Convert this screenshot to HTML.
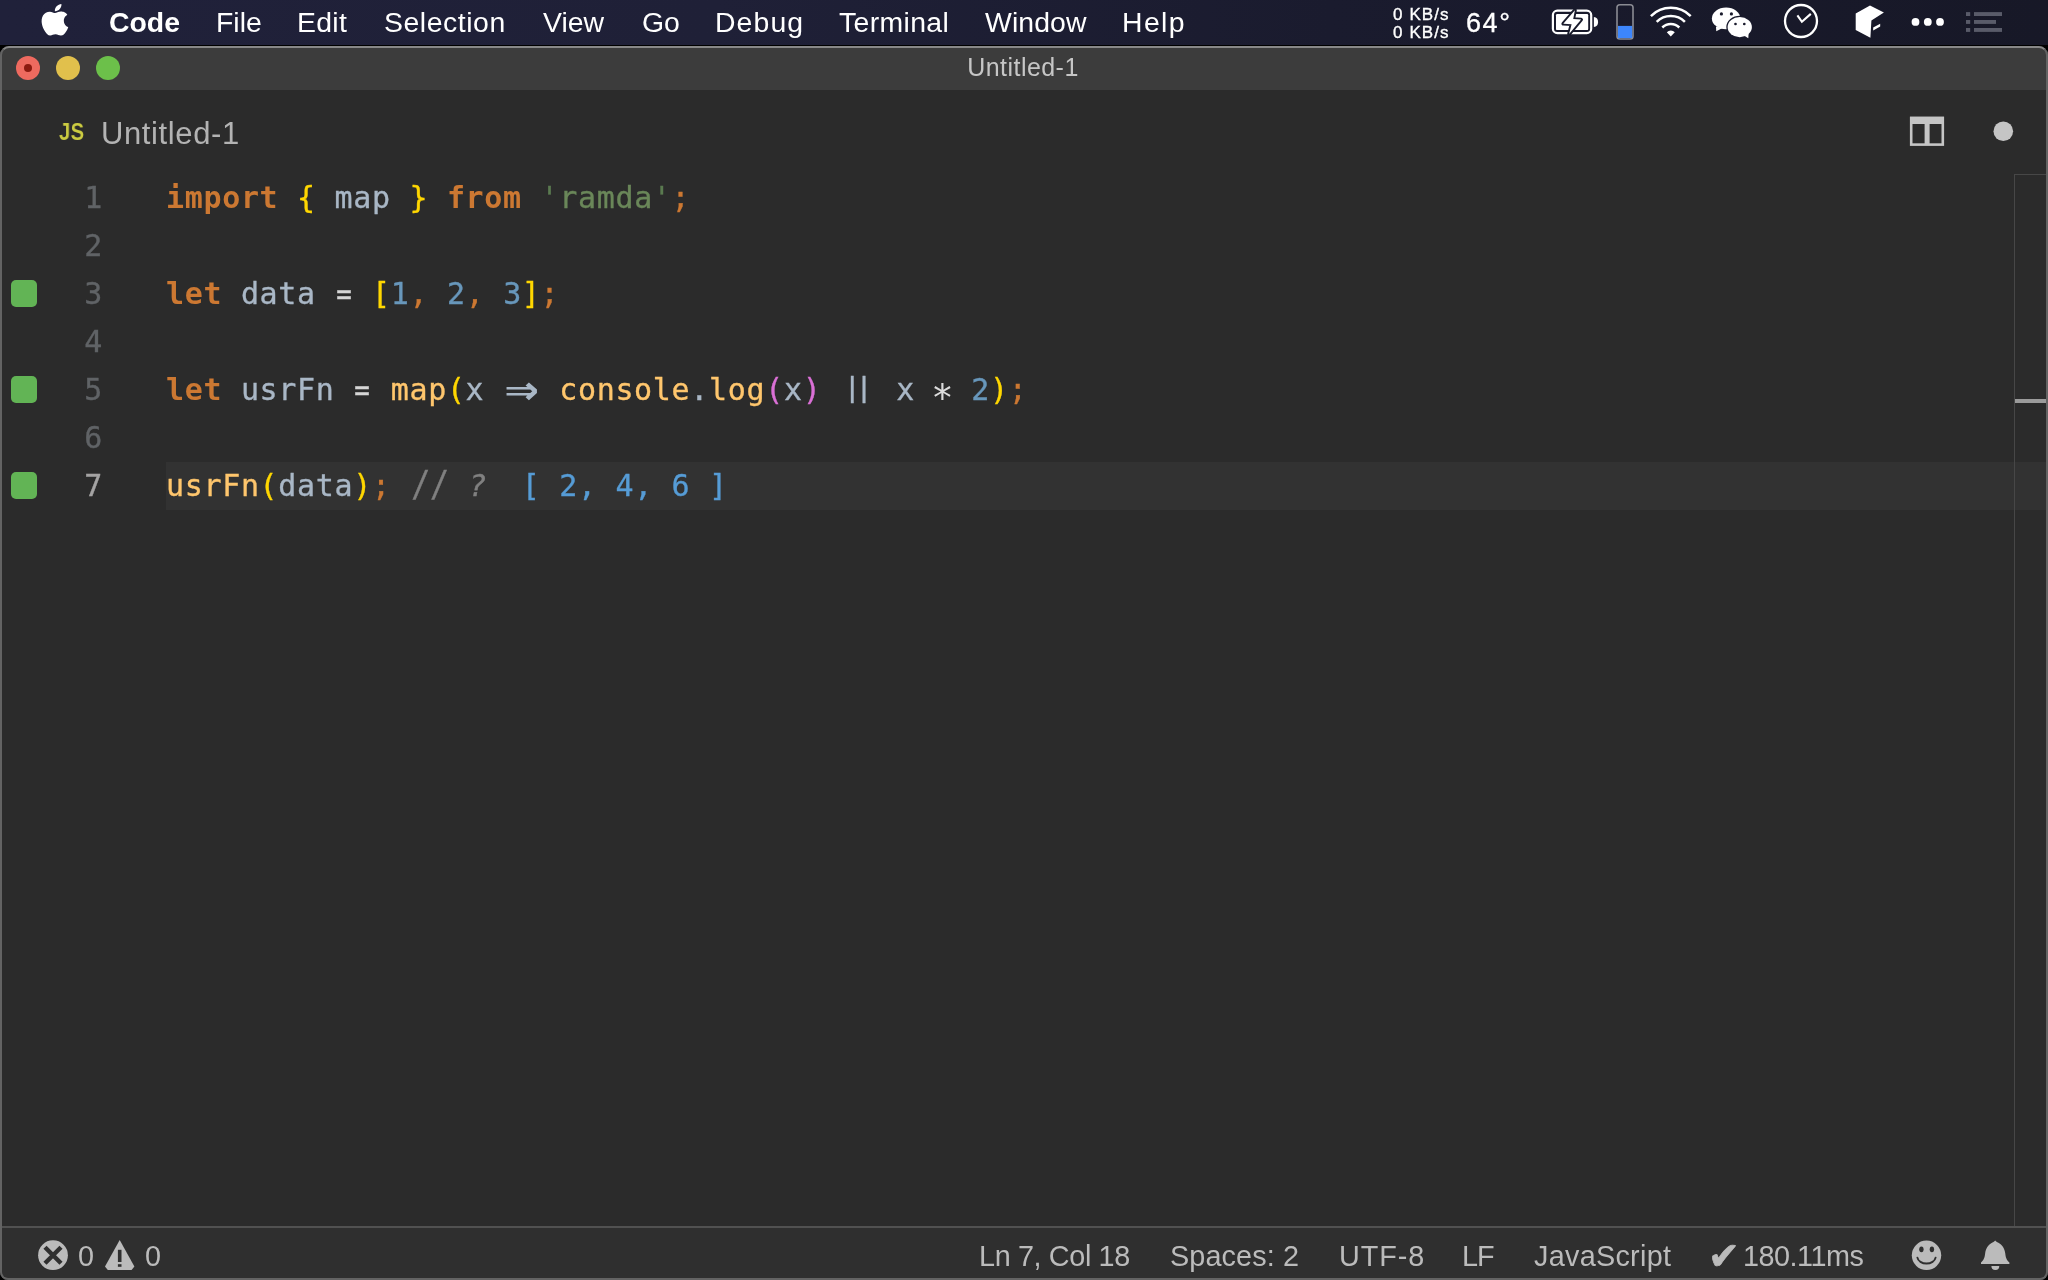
<!DOCTYPE html>
<html lang="en">
<head>
<meta charset="utf-8">
<title>Untitled-1</title>
<style>
*{box-sizing:border-box;margin:0;padding:0}
html,body{width:2048px;height:1280px;overflow:hidden;background:#000}
body{position:relative;font-family:"Liberation Sans",sans-serif;color:#fff}
.abs{position:absolute}
#menubar .mi,.net,#title,#tabs .js,#tabs .tn,.ln,#status .si{will-change:transform}
/* ---------- macOS menu bar ---------- */
#menubar{position:absolute;left:0;top:0;width:2048px;height:44.5px;background:linear-gradient(90deg,#20213a 0%,#1f2037 35%,#1a1b2e 65%,#171827 100%)}
#menubar .mi{position:absolute;top:0px;height:44px;line-height:44px;font-size:28.4px;color:#fff;white-space:nowrap}
#menubar .b{font-weight:bold}
/* ---------- window ---------- */
#win{position:absolute;left:0;top:46px;width:2048px;height:1234px;background:#2b2b2b;border-radius:9px 9px 8px 8px;overflow:hidden}
#winborder{position:absolute;left:0;top:46px;width:2048px;height:1234px;border:2px solid #636363;border-top-color:#888;border-radius:9px 9px 8px 8px;pointer-events:none}
#titlebar{position:absolute;left:0;top:0;width:2048px;height:44px;background:#3c3c3c}
#title{position:absolute;left:-1.5px;top:0.4px;width:2048px;height:42px;line-height:42px;text-align:center;font-size:25px;letter-spacing:0.45px;color:#c6c6c6}
.tl{position:absolute;top:10px;width:24px;height:24px;border-radius:50%}
/* ---------- tabs ---------- */
#tabs{position:absolute;left:0;top:44px;width:2048px;height:84px;background:#2b2b2b}
/* ---------- editor ---------- */
#editor{position:absolute;left:0;top:128px;width:2048px;height:1054px;background:#2b2b2b;font-family:"DejaVu Sans Mono","Liberation Mono",monospace;font-size:30px;letter-spacing:0.66px}
.ln{position:absolute;left:0;width:2048px;height:48px;line-height:48px;white-space:pre}
.ln .no{position:absolute;left:40px;width:63px;text-align:right;color:#606366}
.ln .cd{position:absolute;left:166px;top:0;color:#a9b7c6}
.ln .sq{position:absolute;left:10.5px;top:10.4px;width:26.6px;height:27px;border-radius:5px;background:#62b455}
.cd,.no{-webkit-text-stroke:0.35px}
.k{color:#cc7832;font-weight:bold;-webkit-text-stroke:0}
.ar{display:inline-block;width:37.44px;height:48px;vertical-align:top;text-align:center;text-indent:-3px;letter-spacing:0;font-weight:bold;font-size:50px;line-height:40px;transform:translate(1.8px,2px) scaleX(1.13);transform-origin:50% 50%;-webkit-text-stroke:0}
.bb{display:inline-block;width:37.44px;text-align:center;letter-spacing:-6.36px;text-indent:-6.36px;transform:translate(-0.7px,-2.4px) scaleY(0.875)}
.as{display:inline-block;width:18.72px;height:48px;vertical-align:top;text-align:center;text-indent:-2.6px;letter-spacing:0;font-size:37px;line-height:65px;color:#dcdcdc;-webkit-text-stroke:0}
.eq{display:inline-block;transform:scaleX(0.86);color:#d6d6d6}
.p{color:#cc7832}
.g{color:#ffd700}
.m{color:#da70d6}
.f{color:#ffc66d}
.n{color:#6897bb}
.s{color:#6a8759}
.q{color:#5a7a50}
.w{color:#d4d4d4}
.c{color:#808080;font-style:italic;display:inline-block;transform:translateX(3px)}
.sl{display:inline-block;transform:scaleY(1.17);transform-origin:50% 74%}
.r{color:#569cd6}

#menubar svg{position:absolute;overflow:visible}
.net{position:absolute;left:1392.5px;font-size:17px;letter-spacing:1.1px;color:#fff;height:18px;line-height:18px;white-space:nowrap;-webkit-text-stroke:0.35px #fff}
#tabs .js{position:absolute;left:58.5px;top:6.5px;height:70px;line-height:70px;font-size:23.5px;font-weight:bold;color:#cbcb41;letter-spacing:0.4px;transform:scaleX(0.86);transform-origin:0 50%}
#tabs .tn{position:absolute;left:100.6px;top:9px;height:70px;line-height:70px;font-size:31px;color:#b3b3b3;letter-spacing:0.62px}
#hl{position:absolute;left:166px;top:288px;width:1882px;height:48px;background:#323232}
#ruler{position:absolute;left:2014px;top:0;width:34px;height:1054px;border-left:1px solid #474747;border-top:1px solid #474747}
#rmark{position:absolute;left:2015px;top:225px;width:31px;height:4px;background:#9b9b9b}
#status svg{position:absolute;overflow:visible}
/* ---------- status bar ---------- */
#status{position:absolute;left:0;top:1180px;width:2048px;height:54px;background:#2f2f2f;border-top:2px solid #515151;font-size:28.8px;color:#bbbbbb}
#status .si{position:absolute;top:0;height:54px;line-height:56px;white-space:nowrap}
</style>
</head>
<body>
<div id="menubar">
  <span class="mi b" style="left:108.5px">Code</span>
  <span class="mi" style="left:215.500px">File</span>
  <span class="mi" style="left:296.500px;letter-spacing:0.3px">Edit</span>
  <span class="mi" style="left:384px;letter-spacing:0.55px">Selection</span>
  <span class="mi" style="left:543px">View</span>
  <span class="mi" style="left:642px">Go</span>
  <span class="mi" style="left:714.500px;letter-spacing:1.1px">Debug</span>
  <span class="mi" style="left:838.500px;letter-spacing:0.36px">Terminal</span>
  <span class="mi" style="left:985px;letter-spacing:0.1px">Window</span>
  <span class="mi" style="left:1122px;letter-spacing:1.4px">Help</span>

  <svg width="2048" height="45" viewBox="0 0 2048 45" style="left:0;top:0">
    <!-- apple -->
    <path fill="#fff" transform="translate(38.6 3.9) scale(1.36 1.32)" d="M12.152 6.896c-.948 0-2.415-1.078-3.96-1.04-2.04.027-3.91 1.183-4.961 3.014-2.117 3.675-.546 9.103 1.519 12.09 1.013 1.454 2.208 3.09 3.792 3.039 1.52-.065 2.09-.987 3.935-.987 1.831 0 2.35.987 3.96.948 1.637-.026 2.676-1.48 3.676-2.948 1.156-1.688 1.636-3.325 1.662-3.415-.039-.013-3.182-1.221-3.22-4.857-.026-3.04 2.48-4.494 2.597-4.559-1.429-2.09-3.623-2.324-4.39-2.376-2-.156-3.675 1.09-4.61 1.09zM15.53 3.83c.843-1.012 1.4-2.427 1.245-3.83-1.207.052-2.662.805-3.532 1.818-.78.896-1.454 2.338-1.273 3.714 1.338.104 2.715-.688 3.559-1.701"/>
    <!-- battery -->
    <rect x="1552.9" y="10.7" width="38.3" height="22.4" rx="4.4" fill="none" stroke="#fff" stroke-width="2.2"/>
    <rect x="1556" y="14" width="32.2" height="16.1" rx="1.2" fill="#fff"/>
    <path d="M1593.9 17.1 q4.2 0.5 4.2 4.9 q0 4.400 -4.200 4.900z" fill="#fff"/>
    <path d="M1574.900 10.200 L1563.300 23.700 L1571.600 24.200 L1569.100 34 L1581.100 19.600 L1573.200 19.100 Z" fill="#fff" stroke="#181a2b" stroke-width="3.800" stroke-linejoin="round" style="paint-order:stroke"/>
    <!-- blue gauge -->
    <rect x="1617" y="4.800" width="16" height="34.200" rx="2.800" fill="none" stroke="#8a8b93" stroke-width="1.600"/>
    <rect x="1618" y="25.900" width="14.100" height="12.200" fill="#3d86fc"/>
    <!-- wifi -->
    <g fill="none" stroke="#fff" stroke-width="2.5" stroke-linecap="butt">
      <path d="M1650.9 16.1 A28.1 28.1 0 0 1 1690.7 16.1"/>
      <path d="M1656.7 21.9 A19.9 19.9 0 0 1 1684.9 21.9"/>
      <path d="M1662.3 27.5 A12 12 0 0 1 1679.3 27.5"/>
    </g>
    <path d="M1670.8 36.5 L1666.8 32.3 A5.6 5.6 0 0 1 1674.8 32.3 Z" fill="#fff"/>
    <!-- wechat -->
    <ellipse cx="1726.1" cy="18.4" rx="14.2" ry="10.9" fill="#fff"/>
    <path d="M1716 26.500 L1716.300 31.200 L1722.500 28 Z" fill="#fff"/>
    <circle cx="1721.400" cy="13.900" r="1.600" fill="#191a2c"/>
    <circle cx="1731.400" cy="13.900" r="1.600" fill="#191a2c"/>
    <ellipse cx="1739.750" cy="27.100" rx="12.150" ry="10.100" fill="#fff" stroke="#191a2c" stroke-width="2.600" style="paint-order:stroke"/>
    <path d="M1744 35.500 L1748.300 38.200 L1748.600 33.500 Z" fill="#fff"/>
    <circle cx="1735.500" cy="24" r="1.350" fill="#191a2c"/>
    <circle cx="1744.300" cy="24" r="1.350" fill="#191a2c"/>
    <!-- clock -->
    <circle cx="1801" cy="21" r="16" fill="none" stroke="#fff" stroke-width="2.3"/>
    <path d="M1797.400 15.300 L1801.900 21.800 L1810.800 13.900" fill="none" stroke="#fff" stroke-width="2.1" stroke-linejoin="miter"/>
    <!-- cube -->
    <path fill="#fff" d="M1870 5.400 L1883.900 12.600 L1871.400 20.600 L1870.400 37.700 L1855.700 29.900 L1855.700 13.600 Z"/>
    <path fill="#fff" d="M1873.200 27.600 L1880.200 23.800 L1880.200 26.600 L1873.200 30.500 Z"/>
    <!-- dots -->
    <circle cx="1915.500" cy="21.900" r="3.900" fill="#fff"/>
    <circle cx="1927.800" cy="21.900" r="3.900" fill="#fff"/>
    <circle cx="1940" cy="21.900" r="3.900" fill="#fff"/>
    <!-- list -->
    <g fill="#595b69">
      <rect x="1966" y="12.100" width="4.200" height="3.900"/><rect x="1974" y="12.100" width="28" height="3.900"/>
      <rect x="1966" y="20" width="4.200" height="3.900"/><rect x="1974" y="20" width="22" height="3.900"/>
      <rect x="1966" y="28" width="4.200" height="3.900"/><rect x="1974" y="28" width="28" height="3.900"/>
    </g>
  </svg>
  <span class="net" style="top:6px">0 KB/s</span>
  <span class="net" style="top:24px">0 KB/s</span>
  <span class="mi" style="left:1466px;top:1px;font-size:27px;letter-spacing:1.6px;-webkit-text-stroke:0.3px #fff">64°</span>
</div>
<div id="win">
  <div id="titlebar">
    <div class="tl" style="left:16px;background:#ee6a5f"><i style="position:absolute;left:8px;top:8px;width:8px;height:8px;border-radius:50%;background:#8c1a10"></i></div>
    <div class="tl" style="left:56px;background:#e1c04c"></div>
    <div class="tl" style="left:96px;background:#6cc04a"></div>
    <div id="title">Untitled-1</div>
  </div>
  <div id="tabs">
    <span class="js">JS</span><span class="tn">Untitled-1</span>
    <svg width="140" height="40" viewBox="1900 110 140 40" style="position:absolute;left:1900px;top:20px">
      <rect x="1911.200" y="118" width="31.600" height="26.600" fill="none" stroke="#c5c5c5" stroke-width="2.600"/>
      <rect x="1910" y="116.800" width="34" height="7.200" fill="#c5c5c5"/>
      <rect x="1924.600" y="118" width="5" height="27" fill="#c5c5c5"/>
      <circle cx="2003.300" cy="131.300" r="9.800" fill="#c5c5c5"/>
    </svg>
  </div>
  <div id="editor">
    <div id="hl"></div>
    <div id="ruler"></div>
    <div id="rmark"></div>
    <div class="ln" style="top:0px"><span class="no">1</span><span class="cd"><span class="k">import</span> <span class="g">{</span> map <span class="g">}</span> <span class="k">from</span> <span class="q">'</span><span class="s">ramda</span><span class="q">'</span><span class="p">;</span></span></div>
    <div class="ln" style="top:48px"><span class="no">2</span></div>
    <div class="ln" style="top:96px"><i class="sq"></i><span class="no">3</span><span class="cd"><span class="k">let</span> data <span class="eq">=</span> <span class="g">[</span><span class="n">1</span><span class="p">,</span> <span class="n">2</span><span class="p">,</span> <span class="n">3</span><span class="g">]</span><span class="p">;</span></span></div>
    <div class="ln" style="top:144px"><span class="no">4</span></div>
    <div class="ln" style="top:192px"><i class="sq"></i><span class="no">5</span><span class="cd"><span class="k">let</span> usrFn <span class="eq">=</span> <span class="f">map</span><span class="g">(</span>x <span class="ar">⇒</span> <span class="f">console</span>.<span class="f">log</span><span class="m">(</span>x<span class="m">)</span> <span class="bb">||</span> x <span class="as">*</span> <span class="n">2</span><span class="g">)</span><span class="p">;</span></span></div>
    <div class="ln" style="top:240px"><span class="no">6</span></div>
    <div class="ln" style="top:288px"><i class="sq"></i><span class="no" style="color:#a4a3a3">7</span><span class="cd"><span class="f">usrFn</span><span class="g">(</span>data<span class="g">)</span><span class="p">;</span> <span class="c"><span class="sl">//</span> ?</span>  <span class="r">[ 2, 4, 6 ]</span></span></div>
  </div>
  <div id="status">

    <svg width="2048" height="54" viewBox="0 1226 2048 54" style="left:0;top:-2px">
      <circle cx="53" cy="1255.200" r="14.900" fill="#bbb"/>
      <path d="M45 1247.200 L61 1263.200 M61 1247.200 L45 1263.200" stroke="#2f2f2f" stroke-width="4.400" fill="none"/>
      <path d="M119.700 1240 L134.400 1266.500 L131.600 1270 L107.800 1270 L105 1266.500 Z" fill="#bbb"/>
      <rect x="117.900" y="1249.800" width="3.600" height="12.200" fill="#2f2f2f"/>
      <rect x="117.900" y="1264.200" width="3.600" height="2.600" fill="#2f2f2f"/>
      <!-- smiley -->
      <circle cx="1926.5" cy="1255.3" r="14.7" fill="#bbb"/>
      <ellipse cx="1921.4" cy="1249.3" rx="2.2" ry="2.9" fill="#2f2f2f"/>
      <ellipse cx="1931.900" cy="1249.300" rx="2.200" ry="2.900" fill="#2f2f2f"/>
      <path d="M1917.400 1257.600 A9.200 7 0 0 0 1935.600 1257.600" fill="none" stroke="#2f2f2f" stroke-width="1.900" stroke-linecap="round"/>
      <!-- bell -->
      <path fill="#bbb" d="M1995.200 1240.400 C1996.200 1241.600 1997 1241.900 1998 1242.400 C2002.500 1244.600 2004.600 1248.600 2005.200 1253 C2005.700 1257.300 2006.300 1259.800 2009.400 1262.400 L2009.400 1264.100 L1981 1264.100 L1981 1262.400 C1984.100 1259.800 1984.700 1257.300 1985.200 1253 C1985.800 1248.600 1987.900 1244.600 1992.400 1242.400 C1993.400 1241.900 1994.200 1241.600 1995.200 1240.400 Z"/>
      <path fill="#bbb" d="M1991.400 1266 L1999.300 1266 A3.950 4.100 0 0 1 1991.400 1266 Z"/>
    </svg>
    <span class="si" style="left:77.5px">0</span>
    <span class="si" style="left:145.400px">0</span>
    <span class="si" style="left:979.400px;letter-spacing:-0.37px">Ln 7, Col 18</span>
    <span class="si" style="left:1170px;letter-spacing:0.12px">Spaces: 2</span>
    <span class="si" style="left:1338.500px;letter-spacing:0.95px">UTF-8</span>
    <span class="si" style="left:1462.400px;letter-spacing:-1px">LF</span>
    <span class="si" style="left:1533.500px;letter-spacing:0.28px">JavaScript</span>
    <span class="si" style="left:1707.500px;font-family:'DejaVu Sans',sans-serif;font-size:38px;line-height:56px;-webkit-text-stroke:0.7px">✔</span>
    <span class="si" style="left:1743px;letter-spacing:-0.5px">180.11ms</span>
  </div>
</div>
<div id="winborder"></div>
</body>
</html>
